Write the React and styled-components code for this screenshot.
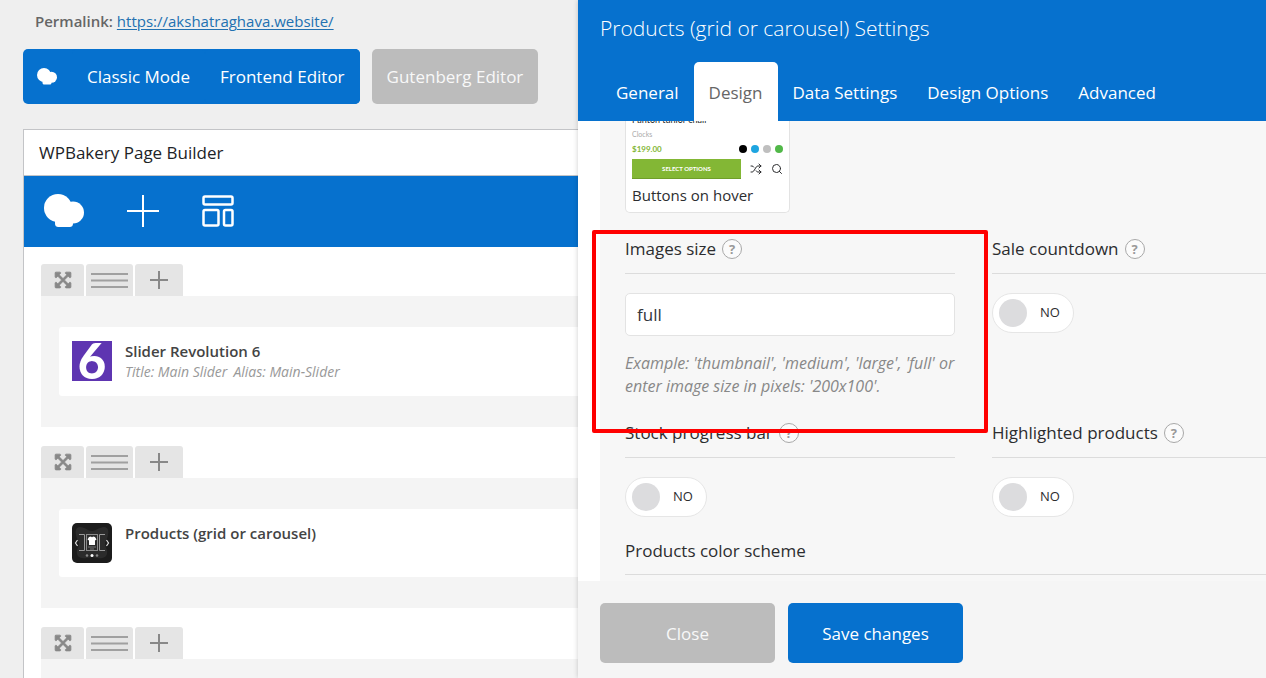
import React from "react";
import styled, { createGlobalStyle } from "styled-components";
import { FaExpandArrowsAlt } from "react-icons/fa";
import { Shuffle, Search } from "lucide-react";

const BLUE = "#0671ce";
const GRAY = "#bcbcbc";

const GlobalStyle = createGlobalStyle`
  * { box-sizing: border-box; }
  body {
    margin: 0;
    background: #efefef;
    color: #2c2d2f;
    font-family: "Open Sans", "Noto Sans", sans-serif;
    font-size: 17px;
  }
  button, input { font: inherit; }
  button { border: 0; padding: 0; cursor: pointer; }
`;

const Page = styled.div`
  display: grid;
  grid-template-columns: minmax(0, 578fr) minmax(0, 688fr);
  height: 100vh;
  overflow: hidden;
`;

/* ---------- Editor side ---------- */

const Editor = styled.main`
  padding-left: 23px;
  overflow: hidden;
  white-space: nowrap;
`;

const Permalink = styled.div`
  padding: 9px 12px 0;
  height: 49px;
  font-size: 15px;
  line-height: 24px;
  color: #666;
  strong { font-weight: 600; }
  a { color: #2271b1; text-underline-offset: 2px; }
`;

const ModeBar = styled.div`
  display: flex;
  gap: 12px;
`;

const ModeGroup = styled.div`
  display: flex;
  align-items: center;
  height: 55px;
  padding-left: 14px;
  border-radius: 5px;
  background: ${BLUE};
`;

const LogoSlot = styled.span`
  display: flex;
  width: 35px;
`;

const ModeButton = styled.button`
  height: 55px;
  padding: 0 15px;
  border-radius: 5px;
  background: ${(p) => (p.$muted ? GRAY : BLUE)};
  color: ${(p) => (p.$muted ? "#f8f8f8" : "#fff")};
`;

const Builder = styled.section`
  margin-top: 25px;
  border: 1px solid #c3c4c7;
  border-right: 0;
  background: #fff;
`;

const BuilderTitle = styled.h2`
  margin: 0;
  padding-left: 15px;
  border-bottom: 1px solid #c3c4c7;
  font-size: 17px;
  font-weight: 500;
  line-height: 45px;
  color: #1d2327;
`;

const Toolbar = styled.div`
  display: flex;
  align-items: center;
  gap: 43px;
  height: 71px;
  padding: 0 0 2px 20px;
  background: ${BLUE};
`;

const ToolButton = styled.button`
  display: flex;
  background: none;
  color: #fff;
`;

const Rows = styled.div`
  display: grid;
  gap: 19px;
  padding: 17px 0 17px 17px;
`;

const RowControls = styled.div`
  display: flex;
  gap: 2px;
  height: 32px;
`;

const RowButton = styled.button`
  display: flex;
  align-items: center;
  justify-content: center;
  width: ${(p) => p.$width}px;
  border-radius: 3px 3px 0 0;
  background: #e5e5e5;
  color: #888;
`;

const RowBody = styled.div`
  padding: 31px 0 31px 18px;
  background: #f4f4f4;
`;

const Element = styled.article`
  display: flex;
  align-items: flex-start;
  gap: 13px;
  padding: 14px 13px;
  border-radius: 3px 0 0 3px;
  background: #fff;
`;

const ElementName = styled.h3`
  margin: 0;
  font-size: 15px;
  font-weight: 600;
  line-height: 20px;
  color: #444;
`;

const ElementInfo = styled.p`
  display: flex;
  gap: 6px;
  margin: 0;
  font-size: 14px;
  font-style: italic;
  line-height: 21px;
  color: #999;
`;

/* ---------- Settings panel ---------- */

const Panel = styled.aside`
  display: flex;
  flex-direction: column;
  min-height: 0;
  position: relative;
  background: #fff;
  box-shadow: 0 0 5px rgba(0, 0, 0, 0.2);
`;

const PanelHeader = styled.header`
  padding-left: 22px;
  background: ${BLUE};
  white-space: nowrap;
`;

const PanelTitle = styled.h1`
  margin: 0;
  padding-top: 10px;
  height: 62px;
  font-size: 21px;
  font-weight: 300;
  line-height: 36px;
  color: #fff;
`;

const Tabs = styled.nav`
  display: flex;
  padding-left: 1px;
`;

const Tab = styled.button`
  height: 59px;
  padding: 2px 15px 0;
  border-radius: 5px 5px 0 0;
  background: ${(p) => (p.$active ? "#fff" : "transparent")};
  color: ${(p) => (p.$active ? "#666" : "#fff")};
`;

const PanelBody = styled.div`
  flex: 1;
  min-height: 0;
  padding-left: 22px;
  overflow: hidden;
`;

const Settings = styled.div`
  min-height: 100%;
  padding-left: 25px;
  background: #f7f7f7;
`;

const HoverCard = styled.div`
  width: 165px;
  height: 92px;
  padding: 0 6px;
  border: 1px solid #e3e3e3;
  border-top: 0;
  border-radius: 0 0 5px 5px;
  background: #fff;
  font-family: Lato, sans-serif;
`;

const ProductName = styled.div`
  display: flex;
  align-items: flex-end;
  height: 5px;
  overflow: hidden;
  font-size: 9px;
  line-height: 12px;
  color: #222;
`;

const ProductCategory = styled.div`
  font-size: 7px;
  line-height: 16px;
  color: #aaa;
`;

const ProductLine = styled.div`
  display: flex;
  align-items: center;
  justify-content: space-between;
  height: ${(p) => p.$height}px;
`;

const Price = styled.span`
  font-size: 8px;
  font-weight: 700;
  color: #83b735;
`;

const Swatches = styled.span`
  display: flex;
  gap: 4px;
`;

const Swatch = styled.i`
  width: 8px;
  height: 8px;
  border-radius: 50%;
  background: ${(p) => p.$color};
`;

const SelectOptions = styled.button`
  width: 109px;
  height: 20px;
  border-bottom: 1px solid #6f9e29;
  background: #83b735;
  font-size: 6px;
  font-weight: 700;
  color: #fff;
`;

const CardCaption = styled.div`
  font-family: "Open Sans", "Noto Sans", sans-serif;
  font-size: 15px;
  line-height: 27px;
`;

const Fields = styled.div`
  display: grid;
  grid-template-columns: minmax(0, 330fr) minmax(0, 274fr);
  gap: 22px 37px;
  padding-top: 23px;
`;

const Field = styled.div`
  position: relative;
  grid-column: ${(p) => (p.$full ? "1 / -1" : "auto")};
`;

const FieldTitle = styled.div`
  display: flex;
  align-items: center;
  gap: 6px;
  padding-bottom: 11px;
  border-bottom: 1px solid #dcdcdc;
  font-weight: 500;
  line-height: ${(p) => (p.$plain ? 24 : 26)}px;
  white-space: nowrap;
`;

const Help = styled.button`
  width: 20px;
  height: 20px;
  border: 1px solid #a8a8a8;
  border-radius: 50%;
  background: #fbfbfb;
  font-size: 13px;
  font-weight: 700;
  line-height: 18px;
  color: #999;
`;

const TextBox = styled.input`
  display: block;
  width: 100%;
  height: 43px;
  margin-top: 19px;
  padding: 0 11px;
  border: 1px solid #e3e3e3;
  border-radius: 5px;
  background: #fff;
  color: #32373c;
`;

const Hint = styled.p`
  margin: 16px -6px 0 0;
  font-size: 16px;
  font-style: italic;
  line-height: 23px;
  color: #888;
`;

const Toggle = styled.label`
  display: flex;
  align-items: center;
  gap: 13px;
  width: 82px;
  height: 40px;
  margin-top: 19px;
  padding: 0 0 3px 6px;
  border: 1px solid #e6e6e6;
  border-radius: 20px;
  background: #fff;
  font-size: 13px;
`;

const ToggleKnob = styled.input`
  appearance: none;
  width: 28px;
  height: 28px;
  margin: 2px 0 0;
  border-radius: 50%;
  background: #dcdcde;
`;

const Highlight = styled.div`
  position: absolute;
  inset: -6px -33px -35px;
  border: 4px solid #f00;
  border-radius: 2px;
  pointer-events: none;
  z-index: 1;
`;

const PanelFooter = styled.footer`
  display: flex;
  gap: 13px;
  padding: 22px 22px 15px;
  background: #f5f5f5;
`;

const FooterButton = styled.button`
  width: 175px;
  height: 60px;
  border-radius: 5px;
  background: ${(p) => (p.$primary ? BLUE : GRAY)};
  color: ${(p) => (p.$primary ? "#fff" : "#f8f8f8")};
`;

/* ---------- Drawings ---------- */

const BakeryLogo = ({ width }) => (
  <svg width={width} viewBox="0 0 40 34" fill="#fff" aria-hidden="true">
    <circle cx="14" cy="14" r="14" />
    <circle cx="29" cy="18.500" r="11" />
    <path d="M11 18h18v11c0 3-1 4-4 4H15c-3 0-4-1-4-4z" />
  </svg>
);

const PlusIcon = ({ size }) => (
  <svg width={size} height={size} viewBox={`0 0 ${size} ${size}`} aria-hidden="true">
    <path
      d={`M${size / 2} 0V${size}M0 ${size / 2}H${size}`}
      stroke="currentColor"
      strokeWidth="2"
    />
  </svg>
);

const TemplatesIcon = () => (
  <svg width="32" height="32" viewBox="0 0 32 32" fill="none" stroke="#fff" strokeWidth="2.500" aria-hidden="true">
    <rect x="1.500" y="1.500" width="29" height="8" rx="1.500" />
    <rect x="1.500" y="15" width="15" height="15.500" rx="1.500" />
    <rect x="22" y="15" width="8.500" height="15.500" rx="1.500" />
  </svg>
);

const LinesIcon = () => (
  <svg width="37" height="16" viewBox="0 0 37 16" stroke="#a0a0a0" strokeWidth="2" aria-hidden="true">
    <path d="M0 2h37M0 8.500h37M0 15h37" />
  </svg>
);

const SliderLogo = () => (
  <svg width="40" height="40" viewBox="0 0 40 40" aria-hidden="true">
    <rect width="40" height="40" fill="#5e35b1" />
    <text x="20" y="38" textAnchor="middle" fontFamily="Lato, sans-serif" fontWeight="900" fontSize="49" fill="#fff">
      6
    </text>
  </svg>
);

const CarouselLogo = () => (
  <svg width="40" height="40" viewBox="0 0 40 40" fill="none" aria-hidden="true">
    <rect width="40" height="40" rx="5" fill="#1c1c1c" />
    <path d="M8 4c5 0 8 4 12 4s7-4 12-4c4 0 5 4 4 8-1 5-3 6-3 9s3 6 2 10-6 5-10 4c-3-1-7-1-10 0-4 1-9 0-10-4s2-7 2-10-2-4-3-9C3 8 4 4 8 4z" fill="#2b2b2b" />
    <path d="M7 11.500h5.500v16H7M33 11.500h-5.500v16H33" stroke="#999" />
    <rect x="14.500" y="11.500" width="11" height="16" stroke="#8a8a8a" />
    <path d="M17 14l2-.5c.5 1 1.500 1 2 0l2 .5 1.500 2.500-1.500 1V22h-6v-4.500l-1.500-1z" fill="#fff" />
    <path d="M16 24h8M18 26h4" stroke="#777" />
    <path d="M5.500 17l-2 3 2 3M34.500 17l2 3-2 3" stroke="#ddd" strokeWidth="1.200" />
    <circle cx="15" cy="32.500" r="1.300" fill="#888" />
    <circle cx="20" cy="32.500" r="1.500" fill="#fff" />
    <circle cx="25" cy="32.500" r="1.300" fill="#888" />
  </svg>
);

/* ---------- Parts ---------- */

const BuilderRow = ({ children }) => (
  <div>
    <RowControls>
      <RowButton $width={43} aria-label="Move row">
        <FaExpandArrowsAlt size={18} stroke="currentColor" strokeWidth={24} />
      </RowButton>
      <RowButton $width={47} aria-label="Row layout">
        <LinesIcon />
      </RowButton>
      <RowButton $width={48} aria-label="Add element">
        <PlusIcon size={18} />
      </RowButton>
    </RowControls>
    <RowBody>{children}</RowBody>
  </div>
);

const SwitchField = ({ id, title }) => (
  <Field>
    <FieldTitle>
      <span id={id}>{title}</span>
      <Help aria-label={`About ${title}`}>?</Help>
    </FieldTitle>
    <Toggle>
      <ToggleKnob type="checkbox" aria-labelledby={id} />
      NO
    </Toggle>
  </Field>
);

const TABS = ["General", "Design", "Data Settings", "Design Options", "Advanced"];
const SWATCHES = ["#000", "#1ea5e0", "#bfbfbf", "#51b848"];

export default function App() {
  return (
    <>
      <GlobalStyle />
      <Page>
        <Editor>
          <Permalink>
            <strong>Permalink:</strong>{" "}
            <a href="https://akshatraghava.website/">https://akshatraghava.website/</a>
          </Permalink>
          <ModeBar>
            <ModeGroup>
              <LogoSlot>
                <BakeryLogo width={20} />
              </LogoSlot>
              <ModeButton>Classic Mode</ModeButton>
              <ModeButton>Frontend Editor</ModeButton>
            </ModeGroup>
            <ModeButton $muted>Gutenberg Editor</ModeButton>
          </ModeBar>
          <Builder>
            <BuilderTitle>WPBakery Page Builder</BuilderTitle>
            <Toolbar>
              <ToolButton aria-label="WPBakery">
                <BakeryLogo width={40} />
              </ToolButton>
              <ToolButton aria-label="Add element">
                <PlusIcon size={32} />
              </ToolButton>
              <ToolButton aria-label="Templates">
                <TemplatesIcon />
              </ToolButton>
            </Toolbar>
            <Rows>
              <BuilderRow>
                <Element>
                  <SliderLogo />
                  <div>
                    <ElementName>Slider Revolution 6</ElementName>
                    <ElementInfo>
                      <span>Title: Main Slider</span>
                      <span>Alias: Main-Slider</span>
                    </ElementInfo>
                  </div>
                </Element>
              </BuilderRow>
              <BuilderRow>
                <Element>
                  <CarouselLogo />
                  <ElementName>Products (grid or carousel)</ElementName>
                </Element>
              </BuilderRow>
              <BuilderRow />
            </Rows>
          </Builder>
        </Editor>

        <Panel>
          <PanelHeader>
            <PanelTitle>Products (grid or carousel) Settings</PanelTitle>
            <Tabs>
              {TABS.map((name) => (
                <Tab key={name} $active={name === "Design"}>
                  {name}
                </Tab>
              ))}
            </Tabs>
          </PanelHeader>
          <PanelBody>
            <Settings>
              <HoverCard>
                <ProductName>Panton tunior chair</ProductName>
                <ProductCategory>Clocks</ProductCategory>
                <ProductLine $height={14}>
                  <Price>$199.00</Price>
                  <Swatches>
                    {SWATCHES.map((color) => (
                      <Swatch key={color} $color={color} />
                    ))}
                  </Swatches>
                </ProductLine>
                <ProductLine $height={26}>
                  <SelectOptions>SELECT OPTIONS</SelectOptions>
                  <Shuffle size={12} />
                  <Search size={12} />
                </ProductLine>
                <CardCaption>Buttons on hover</CardCaption>
              </HoverCard>
              <Fields>
                <Field>
                  <FieldTitle>
                    <label htmlFor="images-size">Images size</label>
                    <Help aria-label="About Images size">?</Help>
                  </FieldTitle>
                  <TextBox id="images-size" type="text" defaultValue="full" />
                  <Hint>
                    Example: 'thumbnail', 'medium', 'large', 'full' or enter image size in pixels: '200x100'.
                  </Hint>
                  <Highlight />
                </Field>
                <SwitchField id="sale-countdown" title="Sale countdown" />
                <SwitchField id="stock-progress" title="Stock progress bar" />
                <SwitchField id="highlighted" title="Highlighted products" />
                <Field $full>
                  <FieldTitle $plain>Products color scheme</FieldTitle>
                </Field>
              </Fields>
            </Settings>
          </PanelBody>
          <PanelFooter>
            <FooterButton>Close</FooterButton>
            <FooterButton $primary>Save changes</FooterButton>
          </PanelFooter>
        </Panel>
      </Page>
    </>
  );
}
